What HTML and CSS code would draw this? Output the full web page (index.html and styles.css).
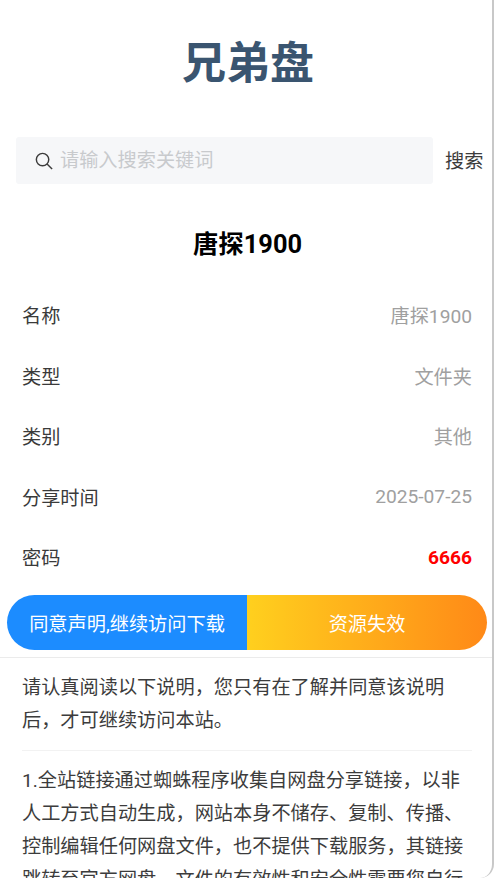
FILE: index.html
```html
<!DOCTYPE html>
<html>
    <head>
        <meta charset="utf-8">
        <title>兄弟盘</title>
        <link rel="stylesheet" href="styles.css">
    </head>
    <body>
        <div class="page">
            <div class="logo">兄弟盘</div>
            <div class="search">
                <div class="search-box">
                    <svg class="search-icon" width="18" height="18" viewBox="0 0 20 20" fill="none" stroke="#3c3c3c" stroke-width="1.6">
                        <circle cx="8.4" cy="8.4" r="6.9"/>
                        <path d="M13.4 13.4 L19 19"/>
                    </svg>
                    <span class="placeholder">请输入搜索关键词</span>
                </div>
                <div class="search-btn">搜索</div>
            </div>
            <h1 class="name">唐探1900</h1>
            <div class="info">
                <div class="row"><span>名称</span><span class="value">唐探1900</span></div>
                <div class="row"><span>类型</span><span class="value">文件夹</span></div>
                <div class="row"><span>类别</span><span class="value">其他</span></div>
                <div class="row"><span>分享时间</span><span class="value">2025-07-25</span></div>
                <div class="row"><span>密码</span><span class="value pwd">6666</span></div>
            </div>
            <div class="actions">
                <div class="btn btn-blue">同意声明,继续访问下载</div>
                <div class="btn btn-orange">资源失效</div>
            </div>
            <div class="notice">
                <p class="lead">请认真阅读以下说明，您只有在了解并同意该说明后，才可继续访问本站。</p>
                <p>1.全站链接通过蜘蛛程序收集自网盘分享链接，以非人工方式自动生成，网站本身不储存、复制、传播、控制编辑任何网盘文件，也不提供下载服务，其链接跳转至官方网盘，文件的有效性和安全性需要您自行判断。</p>
            </div>
        </div>
    </body>
</html>
```

FILE: styles.css
```css
html, body{
    height: 100%;
}
body{
    margin: 0;
    background-color: #fff;
    overflow: hidden;
    font-family: Roboto, "Noto Sans CJK SC", sans-serif;
}
.page{
    box-sizing: border-box;
    width: 494px;
    height: 878px;
    overflow: hidden;
    background-color: #fff;
    border-right: 2px solid #c8c8c8;
    border-radius: 0 0 14px 14px;
}
.logo{
    height: 137px;
    padding: 35px 0 0 4px;
    box-sizing: border-box;
    text-align: center;
    font-size: 44px;
    line-height: 58px;
    font-weight: 700;
    color: #3a5570;
}
.search{
    display: flex;
    align-items: center;
    padding-left: 16px;
}
.search-box{
    display: flex;
    align-items: center;
    gap: 7px;
    box-sizing: border-box;
    width: 417px;
    height: 47px;
    padding-left: 19px;
    padding-bottom: 3px;
    background-color: #f6f7f9;
    border-radius: 3px;
}
.search-icon{
    flex: none;
    margin-top: 3px;
}
.placeholder{
    font-size: 19.2px;
    color: #c8cacd;
}
.search-btn{
    margin-left: 12px;
    margin-bottom: 2px;
    font-size: 19.2px;
    color: #3c3c3c;
}
.name{
    margin: 43px 0 0;
    padding-left: 3px;
    text-align: center;
    font-size: 25.4px;
    line-height: 34px;
    font-weight: 700;
    color: #000;
}
.info{
    margin-top: 24px;
    padding: 0 20px 0 22px;
}
.row{
    display: flex;
    justify-content: space-between;
    align-items: center;
    height: 60.5px;
    font-size: 19.2px;
    color: #3a3a3a;
}
.value{
    color: #a0a0a0;
}
.pwd{
    color: #f00;
    font-weight: 700;
}
.actions{
    display: flex;
    margin: 7.5px 5px 0 7px;
    height: 55px;
}
.btn{
    flex: 1;
    display: flex;
    align-items: center;
    justify-content: center;
    font-size: 19.2px;
    color: #fff;
}
.btn-blue{
    background-color: #1c8cff;
    border-radius: 28px 0 0 28px;
}
.btn-orange{
    background-image: linear-gradient(90deg, #ffd01e, #ff8917);
    border-radius: 0 28px 28px 0;
}
.notice{
    margin-top: 7px;
    padding: 13px 20px 0 22px;
    border-top: 1px solid #ebebeb;
    font-size: 19.2px;
    line-height: 33px;
    color: #3c3c3c;
}
.notice p{
    margin: 0;
}
.lead{
    padding-bottom: 13px;
    margin-bottom: 13px !important;
    border-bottom: 1px solid #f2f2f2;
}
```
